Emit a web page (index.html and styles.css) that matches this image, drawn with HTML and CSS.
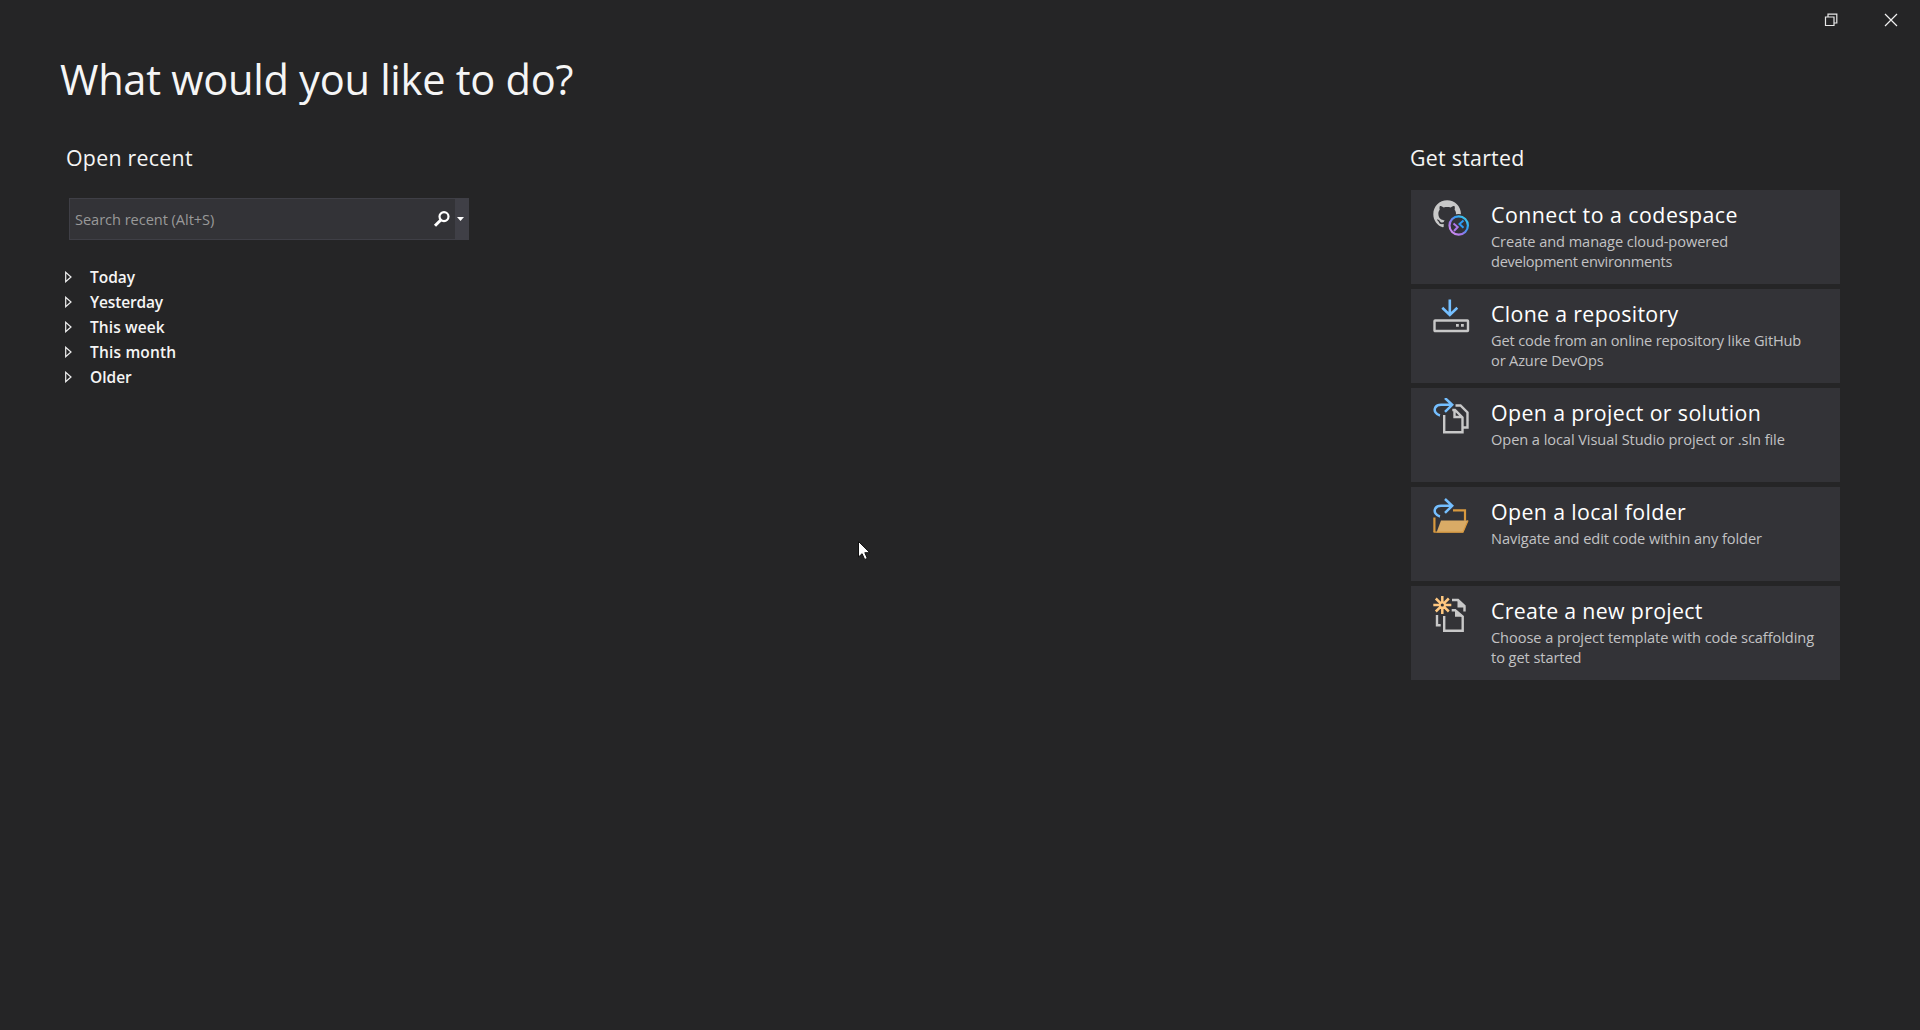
FILE: index.html
```html
<!DOCTYPE html>
<html lang="en">
<head>
<meta charset="utf-8">
<title>What would you like to do?</title>
<link rel="stylesheet" href="styles.css">
</head>
<body>
<header class="titlebar">
  <button class="window-button" aria-label="Restore">
    <svg width="15" height="14" viewBox="0 0 15 14" fill="none" stroke="#e8e8e8" stroke-width="1.200"><path d="M1.500 4h8.500v8.500H1.500zM4 4V1.200h8.800V10H10"/></svg>
  </button>
  <button class="window-button" aria-label="Close">
    <svg width="14" height="14" viewBox="0 0 14 14" fill="none" stroke="#f1f1f1" stroke-width="1.2"><path d="M1 1l12 12M13 1L1 13"/></svg>
  </button>
</header>
<main class="start">
  <h1 class="heading">What would you like to do?</h1>
  <div class="columns">
    <section class="recent">
      <h2 class="section-title">Open recent</h2>
      <div class="search">
        <span class="search-hint">Search recent (Alt+S)</span>
        <svg class="search-icon" width="18" height="18" viewBox="0 0 18 18" fill="none" stroke="#fff"><circle cx="11" cy="6.600" r="4.500" stroke-width="2.200"/><path d="M7.800 10L2 15.800" stroke-width="3"/></svg>
        <span class="search-menu"><svg width="7" height="4" viewBox="0 0 7 4"><path d="M0 0h7L3.500 4z" fill="#fff"/></svg></span>
      </div>
      <ul class="groups">
        <li class="group"><svg class="arrow" width="8" height="12" viewBox="0 0 8 12"><path d="M.7 1.300v9.400L6 6z"/></svg>Today</li>
        <li class="group group-yesterday"><svg class="arrow" width="8" height="12" viewBox="0 0 8 12"><path d="M.7 1.300v9.400L6 6z"/></svg>Yesterday</li>
        <li class="group group-week"><svg class="arrow" width="8" height="12" viewBox="0 0 8 12"><path d="M.7 1.300v9.400L6 6z"/></svg>This week</li>
        <li class="group group-month"><svg class="arrow" width="8" height="12" viewBox="0 0 8 12"><path d="M.7 1.300v9.400L6 6z"/></svg>This month</li>
        <li class="group"><svg class="arrow" width="8" height="12" viewBox="0 0 8 12"><path d="M.7 1.300v9.400L6 6z"/></svg>Older</li>
      </ul>
    </section>
    <section class="get-started">
      <h2 class="section-title">Get started</h2>
      <div class="cards">
        <article class="card card-codespace">
          <svg class="card-icon" width="38" height="38" viewBox="0 0 38 38">
            <defs>
              <linearGradient id="ring" x1="0" y1="1" x2="1" y2="0"><stop offset="0" stop-color="#e39af5"/><stop offset=".35" stop-color="#a173e8"/><stop offset=".65" stop-color="#2f9cf5"/><stop offset="1" stop-color="#45dbe8"/></linearGradient>
              <mask id="badge-gap"><path fill="#fff" d="M0 0h38v38H0z"/><circle cx="25.500" cy="25.500" r="11.500" fill="#000"/></mask>
            </defs>
            <g mask="url(#badge-gap)"><path transform="translate(.3 .3) scale(1.730)" fill="#c8c8c8" d="M8 0C3.580 0 0 3.580 0 8c0 3.540 2.290 6.530 5.470 7.590.4.07.55-.17.55-.38 0-.19-.01-.82-.01-1.490-2.010.37-2.530-.49-2.690-.94-.09-.23-.48-.94-.82-1.130-.28-.15-.68-.52-.01-.53.63-.01 1.080.58 1.230.82.72 1.210 1.870.87 2.330.66.07-.52.28-.87.51-1.070-1.780-.2-3.640-.89-3.640-3.950 0-.87.31-1.590.82-2.150-.08-.2-.36-1.020.08-2.120 0 0 .67-.21 2.200.82.64-.18 1.320-.27 2-.27s1.360.09 2 .27c1.530-1.040 2.200-.82 2.200-.82.44 1.100.16 1.920.08 2.120.51.56.82 1.270.82 2.150 0 3.070-1.870 3.750-3.650 3.950.29.25.54.73.54 1.480 0 1.070-.01 1.930-.01 2.200 0 .21.15.46.55.38A8.010 8.010 0 0 0 16 8c0-4.420-3.580-8-8-8z"/></g>
            <circle cx="25.700" cy="25.500" r="9.200" fill="none" stroke="url(#ring)" stroke-width="2.200"/>
            <path d="M20.500 23.500l4.200 3.500-3.700 4" fill="none" stroke="#ad78ea" stroke-width="2"/><path d="M30.500 20.500l-4 3.500 4 3.800" fill="none" stroke="#2f9cf5" stroke-width="2"/>
          </svg>
          <div class="card-text"><h3 class="card-title">Connect to a codespace</h3><p class="card-desc">Create and manage cloud-powered<br><span class="tight">development environments</span></p></div>
        </article>
        <article class="card card-clone">
          <svg class="card-icon" width="38" height="38" viewBox="0 0 38 38" fill="none">
            <path d="M16.800 .5v15.500M9.300 8.700l7.500 7.200 7.500-7.200" stroke="#75bfff" stroke-width="2.600"/>
            <rect x="1.500" y="21.500" width="33.500" height="10.500" rx=".6" stroke="#c8c8c8" stroke-width="2.400"/>
            <path d="M23 25h2.800v2.800H23zM28 25h2.800v2.800H28z" fill="#c8c8c8"/>
          </svg>
          <div class="card-text"><h3 class="card-title">Clone a repository</h3><p class="card-desc">Get code from an online repository like GitHub<br>or Azure DevOps</p></div>
        </article>
        <article class="card card-project">
          <svg class="card-icon" width="38" height="38" viewBox="0 0 38 38" fill="none">
            <path d="M7 17.500C3 16.500.5 13 2.300 9.500 3.500 7.500 5.500 6.800 8 6.800h10.500M12 0l7.200 6.800-7.200 7" stroke="#75bfff" stroke-width="2.500"/>
            <path d="M11.200 17v17.200h18.300V19.500l-7.500-7.500h-2.700M21.500 12.500v6.500h7.500M22.500 7.500h5l7 7v15h-4" stroke="#c8c8c8" stroke-width="2.400"/>
          </svg>
          <div class="card-text"><h3 class="card-title">Open a project or solution</h3><p class="card-desc">Open a local Visual Studio project or .sln file</p></div>
        </article>
        <article class="card card-folder">
          <svg class="card-icon" width="38" height="38" viewBox="0 0 38 38" fill="none">
            <path d="M7 19.500C3 18.500.5 15 2.300 11.500 3.500 9.500 5.500 8.800 8 8.800h10.500M12 2l7.200 6.800-7.200 7" stroke="#75bfff" stroke-width="2.500"/>
            <path d="M1.400 20.500V35M20 13.300h12v10.500" stroke="#d8993f" stroke-width="2.200"/>
            <path d="M8 23.500h27l-5 12H3.500z" fill="#d9ab66"/><path d="M.5 35.200h29.500L35 23.500" stroke="#d8993f" stroke-width="1.300"/>
          </svg>
          <div class="card-text"><h3 class="card-title">Open a local folder</h3><p class="card-desc">Navigate and edit code within any folder</p></div>
        </article>
        <article class="card card-create">
          <svg class="card-icon" width="38" height="38" viewBox="0 0 38 38" fill="none">
            <path d="M9.300 0v6.500M9.300 11.500V18M.3 9h6.500M11.800 9h6.500M2.800 2.500l4.700 4.700M11.100 10.800l4.700 4.700M15.800 2.500l-4.700 4.700M7.500 10.800l-4.700 4.700" stroke="#ffc880" stroke-width="2.500"/>
            <circle cx="9.300" cy="9" r="2.500" stroke="#ffc880" stroke-width="1.800"/>
            <path d="M11.200 20v14.700h18.500V20.500l-7.500-6.200h-3.500M4 19v10.200h3.700M19 4h6l6.500 6v5.500" stroke="#c8c8c8" stroke-width="2.400"/>
            <path d="M22 13.500l8.500 7.200H22zM24.500 3.500l8 8h-8z" fill="#c8c8c8"/>
          </svg>
          <div class="card-text"><h3 class="card-title">Create a new project</h3><p class="card-desc">Choose a project template with code scaffolding<br>to get started</p></div>
        </article>
      </div>
    </section>
  </div>
</main>
<svg class="cursor" width="13" height="20" viewBox="0 0 13 20"><path d="M.5.5v15.500l3.600-3.300 2.600 5.800 2.600-1.100-2.500-5.700h5z" fill="#fff" stroke="#111"/></svg>
</body>
</html>
```
FILE: styles.css
```css
* { box-sizing: border-box; margin: 0; padding: 0; }

body {
  height: 1030px;
  overflow: hidden;
  background: #252526;
  color: #f5f5f5;
  font-family: "Open Sans", "Noto Sans", sans-serif;
}

.titlebar { display: flex; justify-content: flex-end; height: 40px; }
.window-button {
  display: flex;
  align-items: center;
  justify-content: center;
  width: 59px;
  border: 0;
  background: transparent;
}

.start { padding: 11px 80px 0 60px; }
.heading { font-size: 41.6px; font-weight: 400; line-height: 56px; letter-spacing: -0.28px; }

.columns { display: flex; justify-content: space-between; padding-top: 37px; }
.section-title { font-size: 21.33px; font-weight: 400; line-height: 28px; letter-spacing: 0.27px; }

.recent { width: 409px; padding-left: 6px; }
.search {
  display: flex;
  align-items: center;
  width: 400px;
  height: 42px;
  margin: 26px 0 0 3px;
  padding-left: 5px;
  border: 1px solid #3f3f46;
  background: #333337;
}
.search-hint { flex: 1; color: #999; font-size: 14.6px; letter-spacing: -0.05px; }
.search-icon { margin-right: 4px; }
.search-menu {
  display: flex;
  align-items: center;
  justify-content: center;
  width: 13px;
  height: 40px;
  padding-right: 2px;
  background: #3f3f46;
}

.groups { margin-left: -1px; padding-top: 24px; list-style: none; }
.group {
  display: flex;
  align-items: center;
  gap: 17px;
  height: 25px;
  font-size: 15.5px;
  font-weight: 600;
}
.group-yesterday { letter-spacing: -0.15px; }
.group-week { letter-spacing: 0.1px; }
.group-month { letter-spacing: 0.18px; }
.arrow { fill: none; stroke: #f1f1f1; stroke-width: 1.2; }

.get-started { width: 430px; }
.cards { display: grid; gap: 5px; margin-left: 1px; padding-top: 18px; }
.card {
  display: flex;
  gap: 20px;
  height: 94px;
  padding: 10px 0 0 22px;
  background: #333337;
}
.card-icon { flex: none; }
.card-text { padding-top: 1px; white-space: nowrap; }
.card-title {
  color: #fff;
  font-size: 21.33px;
  font-weight: 400;
  line-height: 28px;
  letter-spacing: 0.38px;
}
.card-desc {
  padding-top: 2px;
  color: #c2c2c4;
  font-size: 14.6px;
  line-height: 20px;
  letter-spacing: -0.07px;
}
.tight { letter-spacing: -0.3px; }
.card-codespace .card-title { letter-spacing: 0.48px; }
.card-clone .card-title { letter-spacing: 0.33px; }
.card-clone .card-desc { letter-spacing: -0.15px; }
.card-create .card-title { letter-spacing: 0.32px; }

.cursor { position: absolute; left: 858px; top: 541px; }
```
